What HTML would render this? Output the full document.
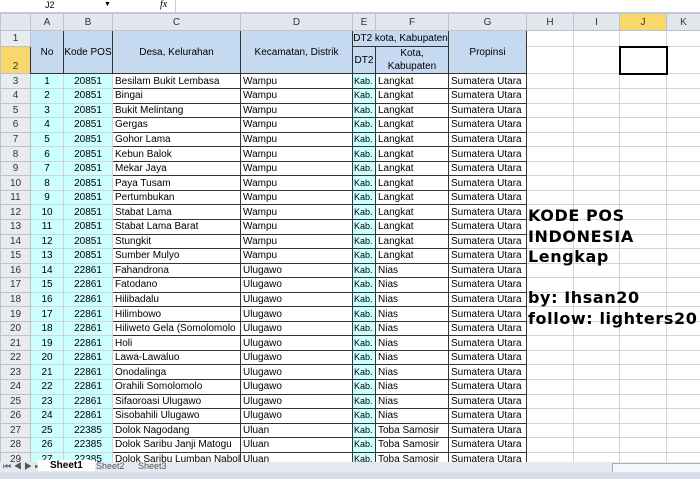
<!DOCTYPE html><html><head><style>
body{margin:0;width:700px;height:479px;overflow:hidden;background:#fff;font-family:"Liberation Sans",sans-serif;position:relative}
.fb{position:absolute;left:0;top:0;width:700px;height:12px;background:#fff;border-bottom:1px solid #c5cdd8}
table{position:absolute;left:0;top:13px;width:700px;border-collapse:collapse;table-layout:fixed;font-size:10px}
td{border:1px solid #d4d4d4;padding:0 0 0 2px;white-space:nowrap;overflow:hidden;height:13.55px;line-height:13px}
.ch td{background:#e3e7ed;color:#333;text-align:center;height:16px;border-color:#bcc3cd;padding:0}
td.rh{background:#e8ebf0;color:#333;text-align:center;border-color:#bcc3cd;padding:0}
.ch td.sel{background:#f8d86a}
.hd{background:#c5d9f1;text-align:center;border:1px solid #333;padding:0}
.d td.a,.d td.b,.d td.e{background:#ccffff}
.d td.e{font-size:9px;padding-left:1px}
.d td.a,.d td.b{text-align:center;padding:0}
.d td.dt{border:1px solid #333}
.big{position:absolute;left:528px;top:206px;font:bold 16px "DejaVu Sans",sans-serif;letter-spacing:0.6px;line-height:20.5px;color:#000}
.tabs{position:absolute;left:0;top:462px;width:700px;height:10px;background:#e6eaf0;font-size:9px;color:#555}
.st{position:absolute;left:0;top:472px;width:700px;height:7px;background:#d6dde8}
</style></head><body>
<div class="fb"><span style="position:absolute;left:45px;top:0;font-size:9px">J2</span><span style="position:absolute;left:104px;top:1px;font-size:7px">▼</span><span style="position:absolute;left:160px;top:-1px;font-size:10px;font-style:italic;font-family:'Liberation Serif'">fx</span><div style="position:absolute;left:175px;top:0;width:1px;height:12px;background:#ccc"></div></div>
<table>
<colgroup><col style="width:30px"><col style="width:33px"><col style="width:49px"><col style="width:128px"><col style="width:112px"><col style="width:23px"><col style="width:73px"><col style="width:78px"><col style="width:47px"><col style="width:46px"><col style="width:47px"><col style="width:34px"></colgroup>
<tr class="ch"><td></td><td>A</td><td>B</td><td>C</td><td>D</td><td>E</td><td>F</td><td>G</td><td>H</td><td>I</td><td class="sel">J</td><td>K</td></tr>
<tr><td class="rh" style="height:15px">1</td><td class="hd" rowspan="2">No</td><td class="hd" rowspan="2">Kode POS</td><td class="hd" rowspan="2">Desa, Kelurahan</td><td class="hd" rowspan="2">Kecamatan, Distrik</td><td class="hd" colspan="2">DT2 kota, Kabupaten</td><td class="hd" rowspan="2">Propinsi</td><td></td><td></td><td></td><td></td></tr>
<tr><td class="rh" style="height:25px;background:#f8d86a;vertical-align:bottom">2</td><td class="hd">DT2</td><td class="hd" style="white-space:normal;line-height:13px">Kota, Kabupaten</td><td></td><td></td><td style="border:2px solid #000"></td><td></td></tr>
<tr class="d"><td class="rh">3</td><td class="a">1</td><td class="b">20851</td><td class="dt">Besilam Bukit Lembasa</td><td class="dt">Wampu</td><td class="e dt">Kab.</td><td class="dt">Langkat</td><td class="dt">Sumatera Utara</td><td></td><td></td><td></td><td></td></tr>
<tr class="d"><td class="rh">4</td><td class="a">2</td><td class="b">20851</td><td class="dt">Bingai</td><td class="dt">Wampu</td><td class="e dt">Kab.</td><td class="dt">Langkat</td><td class="dt">Sumatera Utara</td><td></td><td></td><td></td><td></td></tr>
<tr class="d"><td class="rh">5</td><td class="a">3</td><td class="b">20851</td><td class="dt">Bukit Melintang</td><td class="dt">Wampu</td><td class="e dt">Kab.</td><td class="dt">Langkat</td><td class="dt">Sumatera Utara</td><td></td><td></td><td></td><td></td></tr>
<tr class="d"><td class="rh">6</td><td class="a">4</td><td class="b">20851</td><td class="dt">Gergas</td><td class="dt">Wampu</td><td class="e dt">Kab.</td><td class="dt">Langkat</td><td class="dt">Sumatera Utara</td><td></td><td></td><td></td><td></td></tr>
<tr class="d"><td class="rh">7</td><td class="a">5</td><td class="b">20851</td><td class="dt">Gohor Lama</td><td class="dt">Wampu</td><td class="e dt">Kab.</td><td class="dt">Langkat</td><td class="dt">Sumatera Utara</td><td></td><td></td><td></td><td></td></tr>
<tr class="d"><td class="rh">8</td><td class="a">6</td><td class="b">20851</td><td class="dt">Kebun Balok</td><td class="dt">Wampu</td><td class="e dt">Kab.</td><td class="dt">Langkat</td><td class="dt">Sumatera Utara</td><td></td><td></td><td></td><td></td></tr>
<tr class="d"><td class="rh">9</td><td class="a">7</td><td class="b">20851</td><td class="dt">Mekar Jaya</td><td class="dt">Wampu</td><td class="e dt">Kab.</td><td class="dt">Langkat</td><td class="dt">Sumatera Utara</td><td></td><td></td><td></td><td></td></tr>
<tr class="d"><td class="rh">10</td><td class="a">8</td><td class="b">20851</td><td class="dt">Paya Tusam</td><td class="dt">Wampu</td><td class="e dt">Kab.</td><td class="dt">Langkat</td><td class="dt">Sumatera Utara</td><td></td><td></td><td></td><td></td></tr>
<tr class="d"><td class="rh">11</td><td class="a">9</td><td class="b">20851</td><td class="dt">Pertumbukan</td><td class="dt">Wampu</td><td class="e dt">Kab.</td><td class="dt">Langkat</td><td class="dt">Sumatera Utara</td><td></td><td></td><td></td><td></td></tr>
<tr class="d"><td class="rh">12</td><td class="a">10</td><td class="b">20851</td><td class="dt">Stabat Lama</td><td class="dt">Wampu</td><td class="e dt">Kab.</td><td class="dt">Langkat</td><td class="dt">Sumatera Utara</td><td></td><td></td><td></td><td></td></tr>
<tr class="d"><td class="rh">13</td><td class="a">11</td><td class="b">20851</td><td class="dt">Stabat Lama Barat</td><td class="dt">Wampu</td><td class="e dt">Kab.</td><td class="dt">Langkat</td><td class="dt">Sumatera Utara</td><td></td><td></td><td></td><td></td></tr>
<tr class="d"><td class="rh">14</td><td class="a">12</td><td class="b">20851</td><td class="dt">Stungkit</td><td class="dt">Wampu</td><td class="e dt">Kab.</td><td class="dt">Langkat</td><td class="dt">Sumatera Utara</td><td></td><td></td><td></td><td></td></tr>
<tr class="d"><td class="rh">15</td><td class="a">13</td><td class="b">20851</td><td class="dt">Sumber Mulyo</td><td class="dt">Wampu</td><td class="e dt">Kab.</td><td class="dt">Langkat</td><td class="dt">Sumatera Utara</td><td></td><td></td><td></td><td></td></tr>
<tr class="d"><td class="rh">16</td><td class="a">14</td><td class="b">22861</td><td class="dt">Fahandrona</td><td class="dt">Ulugawo</td><td class="e dt">Kab.</td><td class="dt">Nias</td><td class="dt">Sumatera Utara</td><td></td><td></td><td></td><td></td></tr>
<tr class="d"><td class="rh">17</td><td class="a">15</td><td class="b">22861</td><td class="dt">Fatodano</td><td class="dt">Ulugawo</td><td class="e dt">Kab.</td><td class="dt">Nias</td><td class="dt">Sumatera Utara</td><td></td><td></td><td></td><td></td></tr>
<tr class="d"><td class="rh">18</td><td class="a">16</td><td class="b">22861</td><td class="dt">Hilibadalu</td><td class="dt">Ulugawo</td><td class="e dt">Kab.</td><td class="dt">Nias</td><td class="dt">Sumatera Utara</td><td></td><td></td><td></td><td></td></tr>
<tr class="d"><td class="rh">19</td><td class="a">17</td><td class="b">22861</td><td class="dt">Hilimbowo</td><td class="dt">Ulugawo</td><td class="e dt">Kab.</td><td class="dt">Nias</td><td class="dt">Sumatera Utara</td><td></td><td></td><td></td><td></td></tr>
<tr class="d"><td class="rh">20</td><td class="a">18</td><td class="b">22861</td><td class="dt">Hiliweto Gela (Somolomolo</td><td class="dt">Ulugawo</td><td class="e dt">Kab.</td><td class="dt">Nias</td><td class="dt">Sumatera Utara</td><td></td><td></td><td></td><td></td></tr>
<tr class="d"><td class="rh">21</td><td class="a">19</td><td class="b">22861</td><td class="dt">Holi</td><td class="dt">Ulugawo</td><td class="e dt">Kab.</td><td class="dt">Nias</td><td class="dt">Sumatera Utara</td><td></td><td></td><td></td><td></td></tr>
<tr class="d"><td class="rh">22</td><td class="a">20</td><td class="b">22861</td><td class="dt">Lawa-Lawaluo</td><td class="dt">Ulugawo</td><td class="e dt">Kab.</td><td class="dt">Nias</td><td class="dt">Sumatera Utara</td><td></td><td></td><td></td><td></td></tr>
<tr class="d"><td class="rh">23</td><td class="a">21</td><td class="b">22861</td><td class="dt">Onodalinga</td><td class="dt">Ulugawo</td><td class="e dt">Kab.</td><td class="dt">Nias</td><td class="dt">Sumatera Utara</td><td></td><td></td><td></td><td></td></tr>
<tr class="d"><td class="rh">24</td><td class="a">22</td><td class="b">22861</td><td class="dt">Orahili Somolomolo</td><td class="dt">Ulugawo</td><td class="e dt">Kab.</td><td class="dt">Nias</td><td class="dt">Sumatera Utara</td><td></td><td></td><td></td><td></td></tr>
<tr class="d"><td class="rh">25</td><td class="a">23</td><td class="b">22861</td><td class="dt">Sifaoroasi Ulugawo</td><td class="dt">Ulugawo</td><td class="e dt">Kab.</td><td class="dt">Nias</td><td class="dt">Sumatera Utara</td><td></td><td></td><td></td><td></td></tr>
<tr class="d"><td class="rh">26</td><td class="a">24</td><td class="b">22861</td><td class="dt">Sisobahili Ulugawo</td><td class="dt">Ulugawo</td><td class="e dt">Kab.</td><td class="dt">Nias</td><td class="dt">Sumatera Utara</td><td></td><td></td><td></td><td></td></tr>
<tr class="d"><td class="rh">27</td><td class="a">25</td><td class="b">22385</td><td class="dt">Dolok Nagodang</td><td class="dt">Uluan</td><td class="e dt">Kab.</td><td class="dt">Toba Samosir</td><td class="dt">Sumatera Utara</td><td></td><td></td><td></td><td></td></tr>
<tr class="d"><td class="rh">28</td><td class="a">26</td><td class="b">22385</td><td class="dt">Dolok Saribu Janji Matogu</td><td class="dt">Uluan</td><td class="e dt">Kab.</td><td class="dt">Toba Samosir</td><td class="dt">Sumatera Utara</td><td></td><td></td><td></td><td></td></tr>
<tr class="d"><td class="rh">29</td><td class="a">27</td><td class="b">22385</td><td class="dt">Dolok Saribu Lumban Nabolon</td><td class="dt">Uluan</td><td class="e dt">Kab.</td><td class="dt">Toba Samosir</td><td class="dt">Sumatera Utara</td><td></td><td></td><td></td><td></td></tr>
</table>
<div class="big">KODE POS<br>INDONESIA<br>Lengkap<br><br>by: Ihsan20<br>follow: lighters20</div>
<div class="tabs"><span style="position:absolute;left:3px;top:-1px">⏮ ◀ ▶ ⏭</span><span style="position:absolute;left:38px;top:-2px;background:#fff;color:#000;font-weight:bold;padding:0 12px 0 12px;font-size:10px">Sheet1</span><span style="position:absolute;left:96px;top:-1px">Sheet2</span><span style="position:absolute;left:138px;top:-1px">Sheet3</span><div style="position:absolute;left:612px;top:1px;width:88px;height:8px;background:#f4f6f9;border:1px solid #aab"></div></div>
<div class="st"></div>
</body></html>
